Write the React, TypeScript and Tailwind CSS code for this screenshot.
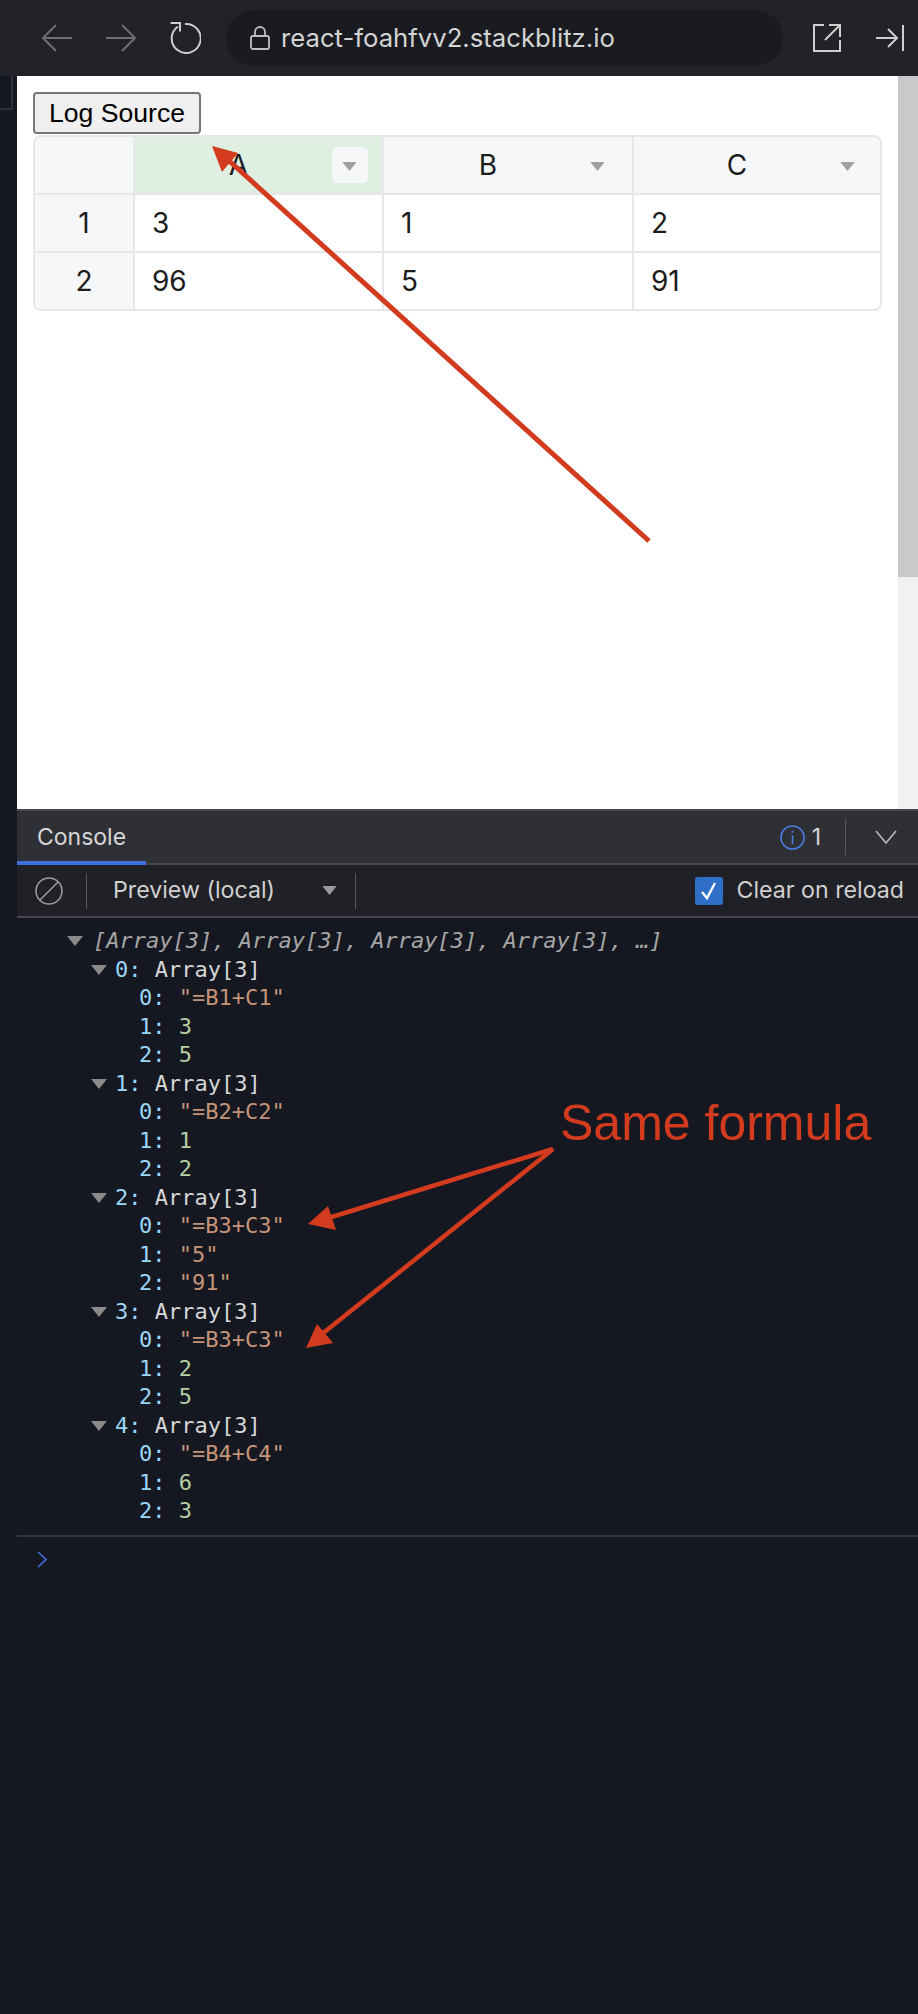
import React from 'react';

const cols = ['A', 'B', 'C'];
const rows = [
  ['1', '3', '1', '2'],
  ['2', '96', '5', '91'],
];

type Val = { v: string; str?: boolean };
const groups: { key: string; items: Val[] }[] = [
  { key: '0', items: [{ v: '"=B1+C1"', str: true }, { v: '3' }, { v: '5' }] },
  { key: '1', items: [{ v: '"=B2+C2"', str: true }, { v: '1' }, { v: '2' }] },
  { key: '2', items: [{ v: '"=B3+C3"', str: true }, { v: '"5"', str: true }, { v: '"91"', str: true }] },
  { key: '3', items: [{ v: '"=B3+C3"', str: true }, { v: '2' }, { v: '5' }] },
  { key: '4', items: [{ v: '"=B4+C4"', str: true }, { v: '6' }, { v: '3' }] },
];

const Caret = ({ className }: { className: string }) => (
  <svg viewBox="0 0 16 10" className={className} fill="currentColor">
    <path d="M0 0H16L8 10Z" />
  </svg>
);

const BrowserBar = () => (
  <div className="h-[76px] shrink-0 bg-[#212329] flex items-center text-[#c9c9c9]">
    <svg viewBox="0 0 32 28" className="ml-[41px] w-[32px] h-[28px] text-[#6d6e72]" fill="none" stroke="currentColor" strokeWidth="2">
      <path d="M31 14H2M15 1L2 14L15 27" />
    </svg>
    <svg viewBox="0 0 32 28" className="ml-[32px] w-[32px] h-[28px] text-[#6d6e72]" fill="none" stroke="currentColor" strokeWidth="2">
      <path d="M1 14H30M17 1L30 14L17 27" />
    </svg>
    <svg viewBox="0 0 32 32" className="ml-[32px] w-[32px] h-[32px] text-[#cfcfcf]" fill="none" stroke="currentColor" strokeWidth="2">
      <path d="M9 4.5A14.5 14.5 0 1 0 16 2" />
      <path d="M1.5 1H11V9.5" />
    </svg>
    <div className="ml-[25px] w-[557px] h-[56px] rounded-[28px] bg-[#1a1b20] flex items-center">
      <svg viewBox="0 0 20 24" className="ml-[24px] w-[20px] h-[24px] text-[#bdbdbd]" fill="none" stroke="currentColor" strokeWidth="1.8">
        <rect x="1" y="10" width="18" height="13" rx="2" />
        <path d="M5 10V6a5 5 0 0 1 10 0V10" />
      </svg>
      <span className="ml-[11px] text-[25.7px] font-['Inter',sans-serif] text-[#d4d4d4]">react-foahfvv2.stackblitz.io</span>
    </div>
    <svg viewBox="0 0 28 28" className="ml-[30px] w-[28px] h-[28px] text-[#cfcfcf]" fill="none" stroke="currentColor" strokeWidth="2">
      <path d="M11 1H1V27H27V16" />
      <path d="M16 1H27V13" />
      <path d="M27 1L12 16" />
    </svg>
    <svg viewBox="0 0 28 26" className="ml-[35px] w-[28px] h-[26px] text-[#cfcfcf]" fill="none" stroke="currentColor" strokeWidth="2">
      <path d="M0 13H20M12 4L21 13L12 22" />
      <path d="M27 0V26" />
    </svg>
  </div>
);

const Sheet = () => (
  <div className="relative h-[733px] shrink-0 flex bg-white">
    <div className="flex-1 pt-[16px] pl-[16px]">
      <button className="block w-[168px] h-[42px] border-2 border-[#767676] rounded-[4px] bg-[#efefef] text-black text-[26.6px] leading-none font-['Liberation_Sans',sans-serif]">
        Log Source
      </button>
      <div className="mt-px w-[849px] grid grid-cols-[100px_249px_250px_246px] border-2 border-[#e6e7ea] rounded-[8px] overflow-hidden font-['Inter',sans-serif] text-[28px] text-[#1c1c1c]">
        <div className="h-[58px] bg-[#f6f7f9] border-r-2 border-b-2 border-[#e6e7ea]" />
        {cols.map((c, i) => (
          <div
            key={c}
            className={`relative h-[58px] flex items-center justify-center pr-[40px] border-b-2 border-[#e6e7ea] ${i === 0 ? 'bg-[#dff0e3]' : 'bg-[#f6f7f9]'} ${i < 2 ? 'border-r-2' : ''}`}
          >
            {c}
            {i === 0 && <div className="absolute right-[14px] top-[10px] w-[36px] h-[36px] rounded-[6px] bg-[#f6f7f9]" />}
            <Caret className={`absolute top-[25px] w-[15px] h-[9px] text-[#a0a0a0] ${i === 1 ? 'right-[27px]' : 'right-[25px]'}`} />
          </div>
        ))}
        {rows.map((r, ri) =>
          r.map((cell, ci) => (
            <div
              key={ci}
              className={`${ri === 0 ? 'h-[58px] border-b-2' : 'h-[56px]'} flex items-center ${ci === 0 ? 'justify-center bg-[#f6f7f9]' : 'pl-[17px] bg-white'} ${ci < 3 ? 'border-r-2' : ''} border-[#e6e7ea]`}
            >
              {cell}
            </div>
          )),
        )}
      </div>
    </div>
    <div className="w-[20px] bg-[#f1f1f1]">
      <div className="h-[501px] bg-[#c9c9c9]" />
    </div>
  </div>
);

const ConsoleHeader = () => (
  <div className="relative h-[56px] shrink-0 flex items-center bg-[#2f3036] border-t-2 border-b-2 border-[#45474d] font-['Inter',sans-serif] text-[#d6d6d6]">
    <span className="ml-[20px] text-[23px]">Console</span>
    <div className="absolute left-0 bottom-[-2px] w-[129px] h-[4px] bg-[#3f6fde]" />
    <svg viewBox="0 0 26 26" className="ml-auto w-[25px] h-[25px] text-[#4a7fe8]" fill="none" stroke="currentColor" strokeWidth="1.6">
      <circle cx="13" cy="13" r="12" />
      <path d="M13 11V20M13 6V8" />
    </svg>
    <span className="ml-[7px] text-[23px]">1</span>
    <div className="ml-[24px] w-px h-[36px] bg-[#55575c]" />
    <svg viewBox="0 0 22 14" className="ml-[29px] mr-[21px] w-[22px] h-[14px] text-[#bdbdbd]" fill="none" stroke="currentColor" strokeWidth="1.5">
      <path d="M1 1L11 13L21 1" />
    </svg>
  </div>
);

const ConsoleToolbar = () => (
  <div className="h-[53px] shrink-0 flex items-center bg-[#202126] border-b-2 border-[#45474d] font-['Inter',sans-serif] text-[23.2px] text-[#d0d0d0]">
    <svg viewBox="0 0 28 28" className="ml-[18px] w-[28px] h-[28px] text-[#9a9a9a]" fill="none" stroke="currentColor" strokeWidth="1.6">
      <circle cx="14" cy="14" r="13" />
      <path d="M23 5L5 23" />
    </svg>
    <div className="ml-[23px] w-px h-[36px] bg-[#55575c]" />
    <span className="ml-[26px]">Preview (local)</span>
    <Caret className="ml-[47px] w-[15px] h-[9px] text-[#9a9a9a]" />
    <div className="ml-[18px] w-px h-[36px] bg-[#55575c]" />
    <div className="ml-auto w-[28px] h-[28px] rounded-[3px] bg-[#2f6fc7] flex items-center justify-center">
      <svg viewBox="0 0 18 20" className="w-[18px] h-[20px] text-white" fill="none" stroke="currentColor" strokeWidth="2.4">
        <path d="M2 11L7 17L15 2" />
      </svg>
    </div>
    <span className="ml-[13px] mr-[14px]">Clear on reload</span>
  </div>
);

const LogOutput = () => (
  <div className="pt-[9px] font-['DejaVu_Sans_Mono',monospace] text-[22px] leading-[28.5px] text-[#d6d6d6]">
    <div className="h-[28.5px] flex items-center pl-[50px] whitespace-pre">
      <Caret className="w-[16px] h-[10px] text-[#8a8a8a]" />
      <span className="ml-[10px] italic text-[#a6a6a6]">[Array[3], Array[3], Array[3], Array[3], …]</span>
    </div>
    {groups.map((g) => (
      <div key={g.key}>
        <div className="h-[28.5px] flex items-center pl-[74px] whitespace-pre">
          <Caret className="w-[16px] h-[10px] text-[#8a8a8a]" />
          <span className="ml-[8px] text-[#9bd6fb]">{g.key}: </span>
          <span>Array[3]</span>
        </div>
        {g.items.map((it, i) => (
          <div key={i} className="h-[28.5px] pl-[122px] whitespace-pre">
            <span className="text-[#9bd6fb]">{i}: </span>
            <span className={it.str ? 'text-[#c59478]' : 'text-[#b5cfa3]'}>{it.v}</span>
          </div>
        ))}
      </div>
    ))}
    <div className="mt-[9px] h-[2px] bg-[#33363d]" />
    <svg viewBox="0 0 10 17" className="ml-[20px] mt-[14px] w-[10px] h-[17px] text-[#3f6fde]" fill="none" stroke="currentColor" strokeWidth="1.6">
      <path d="M1 1L9 8.5L1 16" />
    </svg>
  </div>
);

const Annotations = () => (
  <>
    <svg viewBox="0 0 918 2014" className="absolute inset-0 w-[918px] h-[2014px] pointer-events-none">
      <path d="M649 541L226 158" stroke="#d23b1e" strokeWidth="5" fill="none" />
      <path d="M212 146L238 153L222 172Z" fill="#d23b1e" />
      <path d="M553 1149L325 1219" stroke="#d23b1e" strokeWidth="4.5" fill="none" />
      <path d="M308 1224L328 1206L336 1230Z" fill="#d23b1e" />
      <path d="M553 1149L322 1334" stroke="#d23b1e" strokeWidth="4.5" fill="none" />
      <path d="M306 1348L317 1324L333 1343Z" fill="#d23b1e" />
    </svg>
    <span className="absolute left-[560px] top-[1095px] text-[50px] leading-[56px] text-[#d23b1e] font-['Liberation_Sans',sans-serif]">
      Same formula
    </span>
  </>
);

export default function App() {
  return (
    <div className="relative w-[918px] h-[2014px] overflow-hidden flex flex-col bg-[#151820]">
      <BrowserBar />
      <div className="flex-1 flex">
        <div className="w-[17px] shrink-0">
          <div className="w-[13px] h-[34px] border-r-2 border-b-2 border-[#2e3036] bg-[#151820]" />
        </div>
        <div className="flex-1 flex flex-col">
          <Sheet />
          <ConsoleHeader />
          <ConsoleToolbar />
          <LogOutput />
        </div>
      </div>
      <Annotations />
    </div>
  );
}
